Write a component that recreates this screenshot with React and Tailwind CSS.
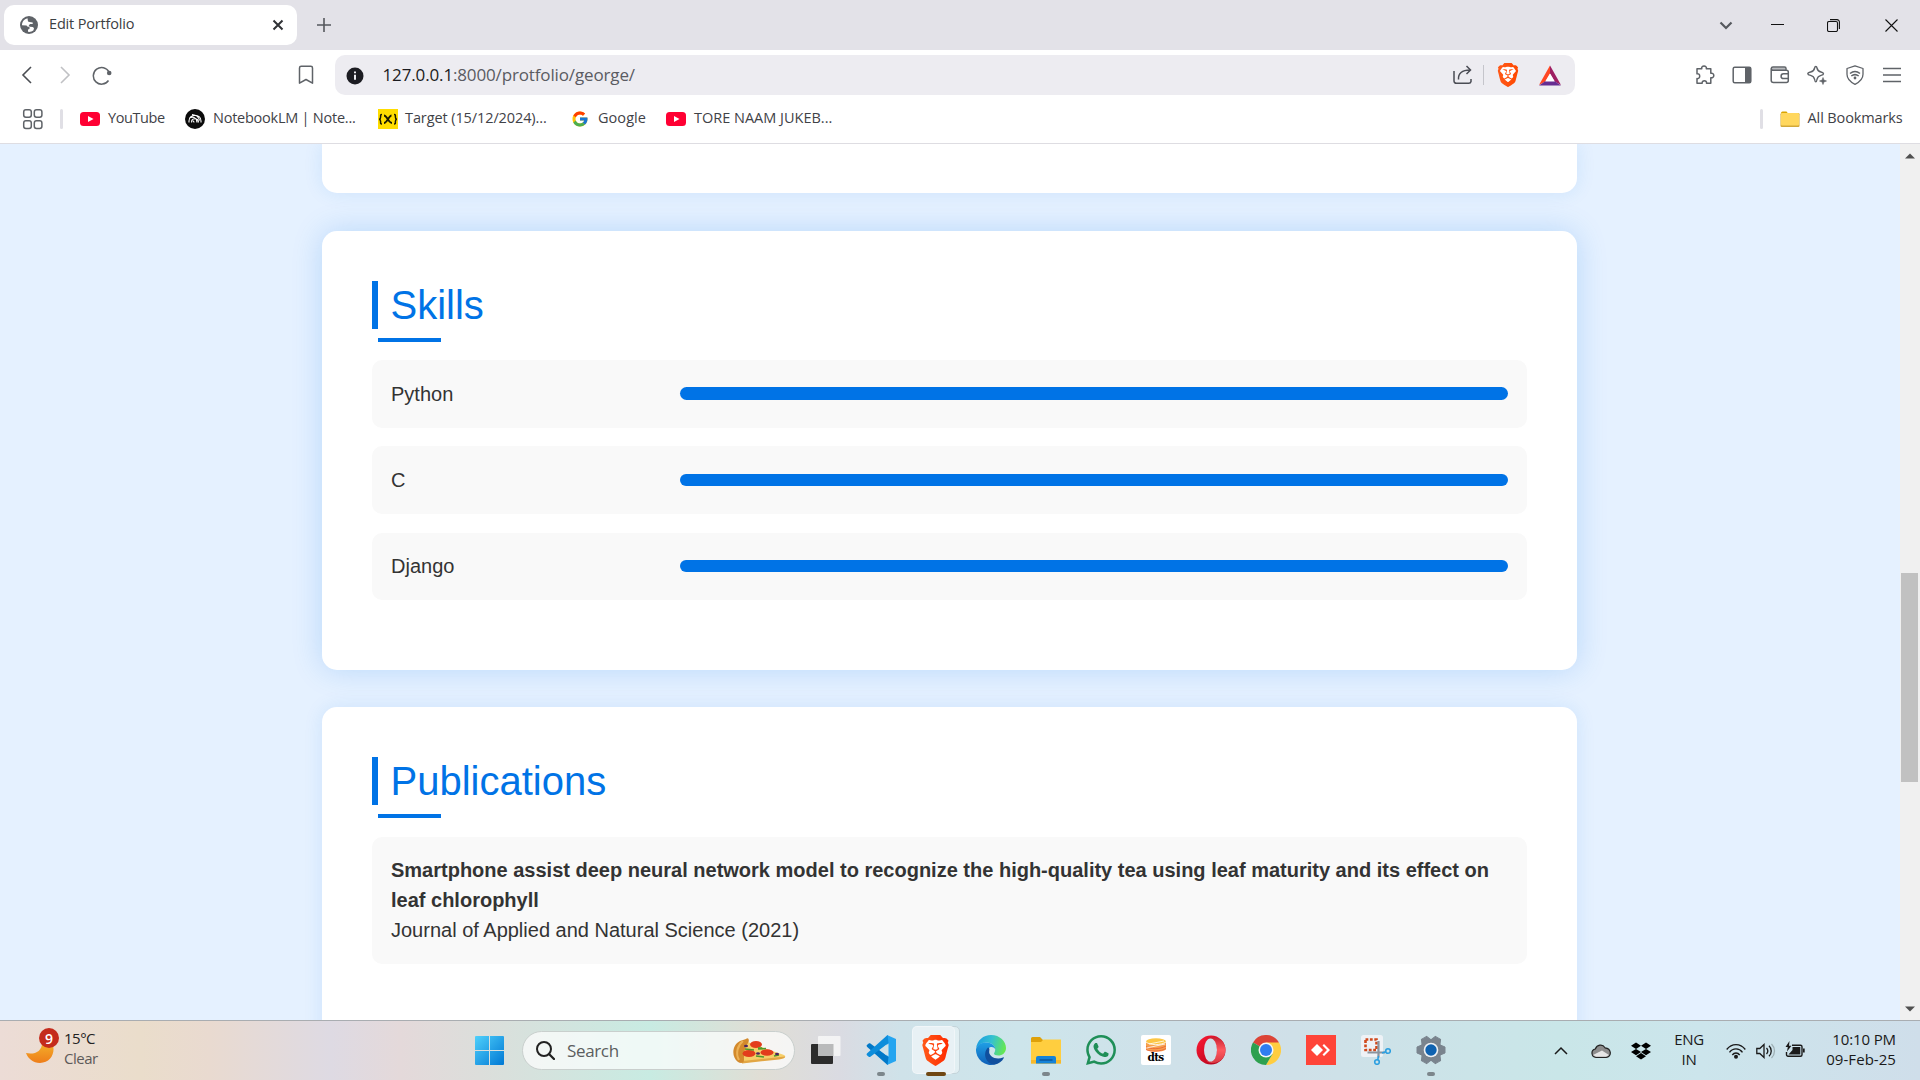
import React from "react";
import { SiBrave, SiDropbox, SiWhatsapp } from "react-icons/si";
import { FcGoogle } from "react-icons/fc";

const ui = "font-['Open_Sans','Noto_Sans',sans-serif]";

const Svg = ({ s = 24, w, h, vb, className = "", children }) => (
  <svg width={w || s} height={h || s} viewBox={vb || `0 0 ${w || s} ${h || s}`} fill="none" className={`shrink-0 ${className}`}>
    {children}
  </svg>
);

const YouTube = () => (
  <Svg w={20} h={20}>
    <rect y="3" width="20" height="14" rx="3.5" fill="#ff0033" />
    <path d="M8 7l5.5 3L8 13z" fill="#fff" />
  </Svg>
);

const BraveLogo = ({ className, color, id }) => (
  <span className={`relative flex shrink-0 ${className}`}>
    <svg viewBox="0 0 24 24" className="absolute inset-0 size-full">
      <path d="M5 4h14l2 5-3.500 9.500L12 22l-5.500-3.500L3 9z" fill="#fff" />
      <linearGradient id={id} x1="0" x2="1">
        <stop offset="0" stopColor="#ff5a1a" />
        <stop offset="1" stopColor={color} />
      </linearGradient>
    </svg>
    <SiBrave className="relative size-full" style={{ fill: `url(#${id})` }} />
  </span>
);

function TabStrip() {
  return (
    <div className="flex h-[50px] shrink-0 items-center bg-[#e3e2e8] pl-1">
      <div className="flex h-10 w-[293px] items-center rounded-[10px] bg-white pl-4 pr-[12px]">
        <Svg s={18}>
          <circle cx="9" cy="9" r="9" fill="#5f6368" />
          <path d="M7.500 2.200C4 3 2 6 2 9.200l4.500.3 1.200 1.300H9.500v2.300l-1.500.3 0 2.400c2 .3 4-.3 5.500-1.500l.5-2.400-1.300-1-3-.1-1-1.500 1.500-1.200h2.500V6.500L9.500 6l-1.500-.5z" fill="#fff" />
        </Svg>
        <span className="ml-[11px] pb-[2px] text-[14.500px] tracking-[-0.170px] text-[#3c4043]">Edit Portfolio</span>
        <Svg s={12} className="ml-auto mr-px">
          <path d="M1.500 1.500l9 9M10.500 1.500l-9 9" stroke="#303236" strokeWidth="2" />
        </Svg>
      </div>
      <Svg s={14} className="ml-5">
        <path d="M7 0v14M0 7h14" stroke="#55585d" strokeWidth="1.600" />
      </Svg>
      <div className="ml-auto flex items-center pr-[22px]">
        <Svg s={14} className="mr-[38px]">
          <path d="M1.500 4.500L7 10l5.500-5.500" stroke="#55585d" strokeWidth="2.200" />
        </Svg>
        <Svg s={13} className="mr-[43px]">
          <path d="M0 5.500h13" stroke="#111" />
        </Svg>
        <Svg s={13} className="mr-[45px]">
          <rect x=".5" y="2.500" width="10" height="10" rx="1.500" stroke="#111" strokeWidth="1.100" />
          <path d="M3 .6h7a2.400 2.400 0 0 1 2.400 2.400v7" stroke="#111" strokeWidth="1.100" />
        </Svg>
        <Svg s={13}>
          <path d="M.5.5l12 12M12.500.5l-12 12" stroke="#111" strokeWidth="1.100" />
        </Svg>
      </div>
    </div>
  );
}

function Toolbar() {
  const c = "#5f6368";
  return (
    <div className="flex h-[50px] shrink-0 items-center pl-[17px]">
      <Svg s={20}>
        <path d="M14 2L6 10l8 8" stroke="#4a4d52" strokeWidth="1.600" />
      </Svg>
      <Svg s={20} className="ml-[18px]">
        <path d="M6 2l8 8-8 8" stroke="#c0c1c4" strokeWidth="1.600" />
      </Svg>
      <Svg s={20} className="ml-[17px]">
        <path d="M16.500 15.500A8.300 8.300 0 1 1 17 7" stroke={c} strokeWidth="1.500" />
        <circle cx="17.200" cy="8" r="2.300" fill={c} />
      </Svg>
      <Svg s={20} className="ml-[184px]">
        <path d="M3.500 3a1.700 1.700 0 0 1 1.700-1.700h9.600A1.700 1.700 0 0 1 16.500 3v15.200L10 14.500 3.500 18.200z" stroke={c} strokeWidth="1.500" strokeLinejoin="round" />
      </Svg>
      <div className="ml-[19px] flex h-10 w-[1240px] items-center rounded-[10px] bg-[#edecf1] pl-[11px]">
        <Svg s={18} className="mt-0.5">
          <circle cx="9" cy="9" r="8.500" fill="#1c1c22" />
          <path d="M9 7.800v5M9 4.500v1.800" stroke="#edecf1" strokeWidth="2" />
        </Svg>
        <span className="ml-[18.500px] text-[17px] tracking-[-0.140px] text-[#5a5b62]">
          <span className="text-[#1b1b20]">127.0.0.1</span>:8000/protfolio/george/
        </span>
        <div className="ml-auto flex items-center pr-[13px]">
          <Svg s={20}>
            <path d="M1 6v10a2.300 2.300 0 0 0 2.300 2.300h12.400A2.300 2.300 0 0 0 18 16.500V14M5.500 14.500C5 8.500 9 5 17 5M13.500 1l4 4-4 4" stroke="#4a4c54" strokeWidth="1.500" />
          </Svg>
          <div className="ml-[10px] h-5 w-px bg-[#c5c5cb]" />
          <BraveLogo className="ml-[12px] size-6" color="#ff4800" id="brave-shield" />
          <Svg w={24} h={21} className="ml-[18px]">
            <path d="M12 .5L1 20l6.500-3.500L12 8.500z" fill="#ff4724" />
            <path d="M12 .5L23 20l-6.500-3.500L12 8.500z" fill="#9e1f63" />
            <path d="M1 20.500h22l-6.500-4.500h-9z" fill="#662d91" />
            <path d="M12 8.500l4.800 8H7.200z" fill="#fff" />
          </Svg>
        </div>
      </div>
      <div className="ml-auto flex items-center gap-[17.400px] pr-[18px]">
        <Svg s={20}>
          <path d="M2 3.700h4.800C5.500.2 12.500.2 11.300 3.700h4.500v4.600c4-.8 4 5 0 4.500v5.400h-4.300c.8-3.300-5-3.300-4.300 0H2v-4.600c3.600.8 3.600-5.600 0-4.800z" stroke={c} strokeWidth="1.500" strokeLinejoin="round" />
        </Svg>
        <Svg s={20}>
          <rect x="1.200" y="2.200" width="17.600" height="15.600" rx="1.500" stroke={c} strokeWidth="1.500" />
          <path d="M13 2h4.500A1.500 1.500 0 0 1 19 3.500v13a1.500 1.500 0 0 1-1.500 1.500H13z" fill={c} />
        </Svg>
        <Svg s={20}>
          <path d="M2 2.500h13.500v2.500H2z" fill="#b9bbbe" />
          <path d="M1.200 3.500v11.800a2.300 2.300 0 0 0 2.300 2.300h12.800a2 2 0 0 0 2-2V7a1.800 1.800 0 0 0-1.800-1.800H3A1.800 1.800 0 0 1 1.200 3.500 1.800 1.800 0 0 1 3 2h11.500a1.500 1.500 0 0 1 1.500 1.500v1.700M18 8.800h-4.500a2.200 2.200 0 0 0 0 4.800H18" stroke={c} strokeWidth="1.500" />
        </Svg>
        <Svg s={20}>
          <path d="M8.800 1.500c.8 0 1 .4 1.200 1.500.5 2.700 1.500 3.500 4 4 1.700.4 2.500.8 2.500 1.700s-.8 1.300-2.500 1.700c-2.500.6-3.500 1.500-4 4-.2 1.200-.4 2.500-1.200 2.500s-1-1.300-1.200-2.500c-.5-2.500-1.500-3.400-4-4C1.900 10 .8 9.600.8 8.700S1.900 7.400 3.600 7c2.500-.5 3.500-1.300 4-4 .2-1.100.4-1.500 1.200-1.500z" stroke={c} strokeWidth="1.400" />
          <path d="M16 12.500l.9 2.600 2.600.9-2.600.9-.9 2.600-.9-2.600-2.600-.9 2.600-.9z" fill={c} stroke={c} strokeWidth=".6" />
        </Svg>
        <Svg s={20}>
          <path d="M10 .8l8 2.700v5.800c0 4.500-3 7.600-8 10-5-2.400-8-5.500-8-10V3.500z" stroke={c} strokeWidth="1.300" strokeLinejoin="round" />
          <path d="M5 8.500c3-2.500 7-2.500 10 0M6.300 11c2.400-1.800 5-1.800 7.400 0" stroke={c} strokeWidth="1.500" />
          <circle cx="10" cy="13" r="1.400" fill={c} />
        </Svg>
        <Svg s={20}>
          <path d="M1 3.500h18M1 10h18M1 16.500h18" stroke={c} strokeWidth="1.500" />
        </Svg>
      </div>
    </div>
  );
}

function BookmarksBar() {
  return (
    <div className="flex h-11 shrink-0 items-center border-b border-[#dedde2] pb-[5px] pl-[22px] text-[14.500px] text-[#3f4247]">
      <Svg s={22}>
        {[[1.700, 1.700], [12.300, 1.700], [1.700, 12.800], [12.300, 12.800]].map(([x, y]) => (
          <rect key={`${x}-${y}`} x={x} y={y} width="7.600" height="7.600" rx="2.200" stroke="#5f6368" strokeWidth="1.500" />
        ))}
      </Svg>
      <div className="ml-4 h-5 w-[3px] rounded bg-[#e0dfe5]" />
      <div className="ml-[17px] flex w-[105px] items-center">
        <YouTube />
        <span className="ml-2 pb-[2px] tracking-[-0.400px]">YouTube</span>
      </div>
      <div className="flex w-[193px] items-center">
        <Svg s={20}>
          <circle cx="10" cy="10" r="10" fill="#0b0b0b" />
          <path d="M4 13.500v-1.500C4 4.500 16 4.500 16 12v1.500M6.600 13.500v-.8c0-4 6.800-4 6.800 0v.8M4.500 9c3-2 7.500-.5 7.500 4.500M9 13.500c0-1-.6-1.600-1.300-1.800M7 5.500c4 .5 7 2.500 7.500 6" stroke="#fff" strokeWidth="1.100" />
        </Svg>
        <span className="ml-2 pb-[2px] tracking-[-0.240px]">NotebookLM | Note...</span>
      </div>
      <div className="flex w-[193px] items-center">
        <Svg s={20}>
          <rect width="20" height="20" fill="#ffdd00" />
          <path d="M4 5.500c-1.600 0-1.400.6-1.400 2.400C2.600 9.500 2.500 10 1.200 10.200c1.300.3 1.400.8 1.400 2.400 0 1.800-.2 2.400 1.400 2.400M16 5.500c1.600 0 1.400.6 1.400 2.400 0 1.600.1 2.100 1.400 2.300-1.300.3-1.400.8-1.400 2.400 0 1.800.2 2.400-1.400 2.400" stroke="#1a1a00" strokeWidth="1.500" />
          <path d="M6 6.500c3 0 4.500 7.500 8 7.500M13.500 6.500c-2.500 0-4.500 7.500-7.500 7.500" stroke="#1a1a00" strokeWidth="1.800" />
        </Svg>
        <span className="ml-[7px] pb-[2px] tracking-[-0.100px]">Target (15/12/2024)...</span>
      </div>
      <div className="flex w-[95px] items-center">
        <FcGoogle className="size-[18px] shrink-0" />
        <span className="ml-[9px] pb-[2px] tracking-[0.050px]">Google</span>
      </div>
      <div className="flex items-center">
        <YouTube />
        <span className="ml-2 pb-[2px] tracking-[0px]">TORE NAAM JUKEB...</span>
      </div>
      <div className="ml-auto flex items-center pr-[17.500px]">
        <div className="h-5 w-[3px] rounded bg-[#e0dfe5]" />
        <Svg s={20} className="ml-[17px]">
          <path d="M1 4a1.500 1.500 0 0 1 1.500-1.500h4L8.500 5H1z" fill="#d9a400" />
          <rect x=".5" y="4" width="19" height="14" rx="1.200" fill="#d2a83a" />
          <rect x="1" y="4" width="18" height="12.500" rx="1" fill="#ffd75e" />
        </Svg>
        <span className="ml-2 pb-[2px] tracking-[-0.130px]">All Bookmarks</span>
      </div>
    </div>
  );
}

const Heading = ({ children }) => (
  <div className="relative h-12 border-l-[6px] border-[#0073e6] pl-[12.500px] text-[40px] leading-[48px] text-[#0073e6]">
    {children}
    <div className="absolute left-0 top-[56.500px] h-1 w-[63px] bg-[#0073e6]" />
  </div>
);

function Page() {
  return (
    <div className="flex h-[876px] shrink-0 overflow-hidden bg-[#e5f1ff] font-['Liberation_Sans',Arial,sans-serif] text-xl leading-[30px] text-[#333]">
      <div className="flex flex-1 flex-col gap-[38px] pl-[322px] pr-[323px]">
        <div className="h-[49px] shrink-0 rounded-b-[15px] bg-white shadow-[0_0_19px_rgba(0,115,230,0.11)]" />
        <section className="h-[439px] shrink-0 rounded-[15px] bg-white p-[50px] shadow-[0_0_31px_rgba(0,115,230,0.2)]">
          <Heading>Skills</Heading>
          <div className="mt-[31px] flex flex-col gap-[18.750px]">
            {["Python", "C", "Django"].map((name) => (
              <div key={name} className="flex h-[67.500px] items-center rounded-[10px] bg-[#f9f9f9] px-[19px]">
                <span className="w-[289px] shrink-0">{name}</span>
                <div className="mb-[0.500px] h-[12.500px] flex-1 rounded-full bg-[#0073e6]" />
              </div>
            ))}
          </div>
        </section>
        <section className="-mt-px h-[400px] shrink-0 rounded-[15px] bg-white p-[50px] shadow-[0_0_19px_rgba(0,115,230,0.11)]">
          <Heading>Publications</Heading>
          <div className="mt-8 h-[127px] rounded-[10px] bg-[#f9f9f9] px-[19px] pt-[18px]">
            <p className="font-bold">
              Smartphone assist deep neural network model to recognize the high-quality tea using leaf maturity and its effect on leaf chlorophyll
            </p>
            <p>Journal of Applied and Natural Science (2021)</p>
          </div>
        </section>
      </div>
      <div className="flex w-5 shrink-0 flex-col items-center bg-[#f0f0f0]">
        <Svg w={10} h={6} className="mt-[9px]">
          <path d="M0 5.500L5 .5l5 5z" fill="#505050" />
        </Svg>
        <div className="mr-px mt-[414px] h-[209px] w-[17px] bg-[#c1c1c1]" />
        <Svg w={10} h={6} className="mb-2 mt-auto">
          <path d="M0 .5l5 5 5-5z" fill="#505050" />
        </Svg>
      </div>
    </div>
  );
}

const VsCode = () => (
  <Svg s={30}>
    <path d="M21 0l9 4v22l-9 4-.5-8V8z" fill="#25a5f0" />
    <path d="M21.500 30L1.200 12c-.8-.8-.8-1.600 0-2.200l1.500-1.300c.5-.4 1.200-.4 1.700 0L22.500 22z" fill="#0078c8" />
    <path d="M21.500 0L1.200 18.200c-.8.8-.8 1.500 0 2.200l1.500 1.300c.5.400 1.200.4 1.700 0L22.500 8z" fill="#0d8ddb" />
    <path d="M22.500 8.500v13L14 15z" fill="#cfe2e9" />
  </Svg>
);

const Edge = () => (
  <Svg s={30}>
    <defs>
      <linearGradient id="edge-top" x1="0" y1=".3" x2="1" y2=".5">
        <stop offset="0" stopColor="#1b9de2" />
        <stop offset=".5" stopColor="#35c1d0" />
        <stop offset="1" stopColor="#66e850" />
      </linearGradient>
      <linearGradient id="edge-left" x1="0" y1="0" x2="0" y2="1">
        <stop offset="0" stopColor="#1f9fe5" />
        <stop offset="1" stopColor="#0f5fb8" />
      </linearGradient>
    </defs>
    <path d="M0 14C1 5 7.500 0 15 0c9 0 15 6.500 15 13 0 5-4 7.500-7.500 7.500-3 0-4.500-1-4.500-2 0-.8 1.200-1.500 1.200-4C19 10 15 7.500 10 7.500 5 7.500 1 11 0 14z" fill="url(#edge-top)" />
    <path d="M0 14C1.500 9.500 5.500 7.500 10 7.500c5 0 8.800 2.500 9.200 6.500-2-3.500-8-2.500-8 3.500 0 5 3 10 8.300 11.700A15 15 0 0 1 0 14z" fill="url(#edge-left)" />
    <path d="M12 12.500c-6 6-2 17 7 17 3.500-.6 7-3 8.800-6.500.3-.6-.2-.9-.8-.6-6.500 3.200-15-1-13.700-6.900.2-1.500.4-2.500-1.300-3z" fill="#104f9e" />
  </Svg>
);

const Explorer = () => (
  <Svg s={30}>
    <path d="M0 3.500A1.500 1.500 0 0 1 1.500 2H9l3 3v4H0z" fill="#dfa10a" />
    <path d="M0 7h10l2.500-2.500H30v24H0z" fill="#ffce3f" />
    <path d="M0 25h30v3.500H0z" fill="#f7b92b" />
    <path d="M5 28.500V23a2 2 0 0 1 2-2h16a2 2 0 0 1 2 2v5.500z" fill="#1583d8" />
    <path d="M8.500 25h13" stroke="#0b4f94" strokeWidth="1.300" />
  </Svg>
);

const Dts = () => (
  <div className="flex size-[30px] flex-col items-center rounded-[2px] bg-white pt-[3px]">
    <Svg w={22} h={14}>
      <path d="M1 3.500v8c4 3 16 3 20 0v-8z" fill="#f6a04d" />
      <path d="M1 8.500c4 3 14 3 20-.5M1 11.500c5 2.500 15 2 20-1" stroke="#ed6b3a" strokeWidth="1" />
      <ellipse cx="11" cy="3.500" rx="10" ry="3.200" fill="#fcc644" />
      <path d="M1 4c4 3.500 15 3.500 20 0M4 6l15-3M1.500 10L20 6" stroke="#fff" strokeWidth=".8" />
    </Svg>
    <span className="font-['DejaVu_Serif',serif] text-[10.500px] font-bold leading-[11px] tracking-[-0.700px] text-black">dts</span>
  </div>
);

const Opera = () => (
  <Svg s={30}>
    <linearGradient id="opera-red" x1="0" y1="0" x2="1" y2="1">
      <stop offset="0" stopColor="#ff1b35" />
      <stop offset="1" stopColor="#a80018" />
    </linearGradient>
    <linearGradient id="opera-light" x1="0" y1="0" x2="0" y2="1">
      <stop offset="0" stopColor="#c8202f" />
      <stop offset=".5" stopColor="#ff5a5f" />
      <stop offset="1" stopColor="#d83a44" />
    </linearGradient>
    <circle cx="15" cy="15" r="14.500" fill="url(#opera-red)" />
    <path d="M10 4.500c8-6.500 19.500 0 19.500 10.500S18 32 10 25.500c7 2 11-4.500 11-10.500S17 2.500 10 4.500z" fill="url(#opera-light)" />
    <ellipse cx="14.500" cy="15" rx="6.500" ry="11.500" fill="#cfe1e9" />
  </Svg>
);

const Chrome = () => (
  <Svg s={30}>
    <path d="M15 15L2 7.500A15 15 0 0 1 28 7.500z" fill="#dc4437" />
    <path d="M15 7.500h13A15 15 0 0 1 15 30l6.500-11.300z" fill="#ffcd40" />
    <path d="M15 15L2 7.500A15 15 0 0 0 15 30l6.500-11z" fill="#2da04f" />
    <circle cx="15" cy="15" r="7.500" fill="#f4f6f8" />
    <circle cx="15" cy="15" r="6" fill="#2f7df0" />
  </Svg>
);

const AnyDesk = () => (
  <Svg s={30}>
    <rect width="30" height="30" fill="#ff4438" />
    <path d="M5 15l6-6 6 6-6 6z" fill="#fff" />
    <path d="M14.500 10.500L16 9l6 6-6 6-1.500-1.500L19 15z" fill="#fff" transform="translate(2 0)" />
  </Svg>
);

const Snip = () => (
  <Svg s={30}>
    <rect width="22" height="22" rx="2.500" fill="#eef2f6" />
    <rect x="4.500" y="4.500" width="11" height="10.500" stroke="#d0491c" strokeWidth="2.600" strokeDasharray="2.800 1.600" />
    <path d="M17.500 6v16.500M6.500 17.500h17.500" stroke="#8a949e" strokeWidth="2.200" />
    <circle cx="27" cy="16" r="2.300" stroke="#2c9fe0" strokeWidth="1.600" />
    <circle cx="16" cy="27" r="2.300" stroke="#2c9fe0" strokeWidth="1.600" />
    <path d="M21 18l4-1.300M17.500 21l-.8 4" stroke="#2c9fe0" strokeWidth="1.500" />
  </Svg>
);

const Gear = () => (
  <Svg s={30}>
    <g fill="#7a848e" stroke="#7a848e" strokeLinejoin="round">
      <circle cx="15" cy="15" r="10.500" />
      {[0, 60, 120, 180, 240, 300].map((a) => (
        <path key={a} d="M23 9.500l6 2.500v6l-6 2.500z" transform={`rotate(${a} 15 15)`} />
      ))}
    </g>
    <circle cx="15" cy="15" r="7.300" fill="#eef1f4" />
    <circle cx="15" cy="15" r="5.700" fill="#0f62b0" />
  </Svg>
);

const Pizza = () => (
  <Svg w={54} h={27} className="ml-auto mr-2">
    <path d="M10 3l42 15c2 1 1.500 2.500-.5 3L10 26z" fill="#f6cf6a" />
    <path d="M10 24l43-4.500c0 2-3 2.500-6 3L10 26.500z" fill="#e2a644" />
    <path d="M14 2c2-2 4 1 2 4-4 5-4 12-4 17 0 3-3 4-6 2C-1 20 0 8 8 4z" fill="#d38a2c" />
    <path d="M11 4c-5 4-8 12-4 19" stroke="#edb256" strokeWidth="2" />
    <ellipse cx="24" cy="7.500" rx="6" ry="3.500" fill="#e33d1c" />
    <ellipse cx="17" cy="16.500" rx="6.500" ry="3.500" fill="#e33d1c" />
    <ellipse cx="35" cy="15.500" rx="6.500" ry="3.200" fill="#e33d1c" />
    <path d="M13 12l9 1M26 12l8-.5M24 19l8 1M42 19l5-1M26 11h4" stroke="#4f9a2c" strokeWidth="1.600" />
    <g fill="#4b2461">
      <ellipse cx="14" cy="9" rx="2" ry="1.300" />
      <ellipse cx="26" cy="16.500" rx="2" ry="1.300" />
      <ellipse cx="45" cy="17" rx="2" ry="1.300" />
    </g>
  </Svg>
);

const apps = [
  { id: "code", el: <VsCode />, open: true },
  { id: "brave", active: true },
  { id: "edge", el: <Edge /> },
  { id: "files", el: <Explorer />, open: true },
  { id: "whatsapp", el: <SiWhatsapp className="size-[30px] text-[#1f8f58]" /> },
  { id: "dts", el: <Dts /> },
  { id: "opera", el: <Opera /> },
  { id: "chrome", el: <Chrome /> },
  { id: "anydesk", el: <AnyDesk /> },
  { id: "snip", el: <Snip /> },
  { id: "settings", el: <Gear />, open: true },
];

function Taskbar() {
  const k = "#1a1a1a";
  return (
    <div className="flex h-[60px] shrink-0 items-center border-t border-[#a9adb1] bg-[linear-gradient(90deg,#ecdcd6_0px,#eaddcb_140px,#e9dad0_210px,#dedae3_330px,#e4d9da_400px,#dcdedb_480px,#c8ebe2_650px,#e0ded5_760px,#dadbe2_840px,#cfe2e9_900px,#cde5eb_1020px,#d0dfe8_1250px,#c9e6e8_1560px,#cce5ec_1700px,#cfdeea_1920px)]">
      <div className="flex w-[475px] items-center pb-[5px] pl-[26px]">
        <div className="relative h-[38px] w-[38px]">
          <Svg w={28} h={24} className="mt-[10px]">
            <linearGradient id="moon" x1="0" y1="0" x2="0" y2="1">
              <stop offset="0" stopColor="#f4b52c" />
              <stop offset="1" stopColor="#ee7d1a" />
            </linearGradient>
            <path d="M25 2c6 9 1 22-11 22C7 24 2 19.500 0 14c9 2 17-2 16-12z" fill="url(#moon)" />
          </Svg>
          <div className="absolute -top-[1px] left-[13px] flex size-5 items-center justify-center rounded-full bg-[#c42b1c] text-[14px] font-semibold text-white">9</div>
        </div>
        <div className="text-[15px] leading-5 tracking-[-0.500px]">
          <div className="text-[#222]">15°C</div>
          <div className="text-[#5d5a59]">Clear</div>
        </div>
      </div>
      <Svg s={29}>
        <linearGradient id="win" x1="0" y1="0" x2="1" y2="1">
          <stop offset="0" stopColor="#4fd0fb" />
          <stop offset="1" stopColor="#0078d4" />
        </linearGradient>
        <path d="M1 0h13v14H0V1a1 1 0 0 1 1-1zM15 0h13a1 1 0 0 1 1 1v13H15zM0 15h14v14H1a1 1 0 0 1-1-1zM15 15h14v13a1 1 0 0 1-1 1H15z" fill="url(#win)" />
      </Svg>
      <div className="ml-[18px] flex h-[39px] w-[273px] items-center rounded-full border border-[#c9cfcd] bg-white/70 pl-[13px]">
        <Svg s={19}>
          <circle cx="8" cy="8" r="7" stroke="#222" strokeWidth="2" />
          <path d="M13 13l5 5" stroke="#222" strokeWidth="2.300" strokeLinecap="round" />
        </Svg>
        <span className="ml-3 text-[17px] tracking-[-0.350px] text-[#5b5e5e]">Search</span>
        <Pizza />
      </div>
      <Svg s={30} className="ml-4">
        <rect y="8" width="22" height="20" rx="1" fill="#2c2c2c" />
        <rect x="7" width="22.500" height="20" rx="1" fill="#f4f4f4" fillOpacity=".95" />
        <path d="M7 8h15.500v12H7z" fill="#b9babb" />
      </Svg>
      <div className="ml-[12px] flex pb-px">
        {apps.map((a) => (
          <div key={a.id} className="relative flex h-[59px] w-[55px] items-center justify-center">
            {a.active && (
              <>
                <div className="absolute left-[6px] top-[5px] h-12 w-[46px] rounded-[5px] border border-[#c4d4da] bg-white/40" />
                <div className="absolute left-[3.500px] top-[5px] h-12 w-[43px] rounded-[5px] border border-white/40 bg-[#e8f1f5]" />
                <BraveLogo className="-ml-px size-[31px]" color="#ff2a00" id="brave-app" />
                <div className="absolute bottom-[4px] h-1 w-5 rounded-full bg-[#6f4713]" />
              </>
            )}
            {a.el}
            {a.open && <div className="absolute bottom-[4px] h-1 w-2 rounded-full bg-[#7c868b]" />}
          </div>
        ))}
      </div>
      <div className="ml-auto flex items-center pr-6 text-[15px] leading-5 text-[#1a1a1a]">
        <Svg s={14}>
          <path d="M1 10l6-6 6 6" stroke={k} strokeWidth="1.500" />
        </Svg>
        <Svg w={20} h={14} className="ml-[23px]">
          <path d="M5 13.300a4.200 4.200 0 0 1-.7-8.300C6 .8 11.500-.5 14 3.800c3 .3 5 2 5.300 4.700.2 2.600-1.500 4.800-4 4.800z" fill="#8d8d8d" stroke="#222" strokeWidth="1.200" />
          <path d="M2 11l9-4.500 7 4.500-3 1.700H5z" fill="#e6e6e6" />
        </Svg>
        <SiDropbox className="ml-5 size-[20px] text-black" />
        <div className="ml-[22px] mr-px w-[32px] pb-[3px] text-center tracking-[-0.300px]">
          <div>ENG</div>
          <div>IN</div>
        </div>
        <Svg w={20} h={16} className="ml-[20px]">
          <path d="M.7 6.500c5-6.500 13.600-6.500 18.600 0M3.500 9.300c3.500-4.600 9.500-4.600 13 0M6.300 12c2-2.700 5.400-2.700 7.400 0" stroke={k} strokeWidth="1.400" />
          <circle cx="10" cy="13.800" r="2" fill={k} />
        </Svg>
        <Svg w={20} h={16} className="ml-[10px]">
          <path d="M.8 5.500h3L8 1.500v13l-4.200-4h-3zM10.500 5c1.600 1.800 1.600 4.200 0 6M13 2.800c3 3 3 7.400 0 10.400" stroke={k} strokeWidth="1.300" />
          <path d="M15.500 1c4 4 4 10 0 14" stroke="#9fb0b5" strokeWidth="1.300" />
        </Svg>
        <Svg w={20} h={17} className="ml-[9px] mr-px mb-0.5">
          <path d="M7 4.200h8.500a1.500 1.500 0 0 1 1.500 1.500v8a1.500 1.500 0 0 1-1.500 1.500H3a1.500 1.500 0 0 1-1.500-1.500V11" stroke={k} strokeWidth="1.400" />
          <path d="M7.500 6h7.800v7.500H3.500L7.500 9zM18 7.500h1.700v4H18zM4.500 0L.5 6h2.300L2 10.500 6.500 4.700H4z" fill={k} />
        </Svg>
        <div className="ml-[18px] w-[72px] whitespace-nowrap pb-[4px] text-right">
          <div className="tracking-[-0.120px]">10:10 PM</div>
          <div className="tracking-[0.050px]">09-Feb-25</div>
        </div>
      </div>
    </div>
  );
}

export default function App() {
  return (
    <div className={`flex h-[1080px] w-[1920px] flex-col overflow-hidden bg-white ${ui}`}>
      <TabStrip />
      <Toolbar />
      <BookmarksBar />
      <Page />
      <Taskbar />
    </div>
  );
}
